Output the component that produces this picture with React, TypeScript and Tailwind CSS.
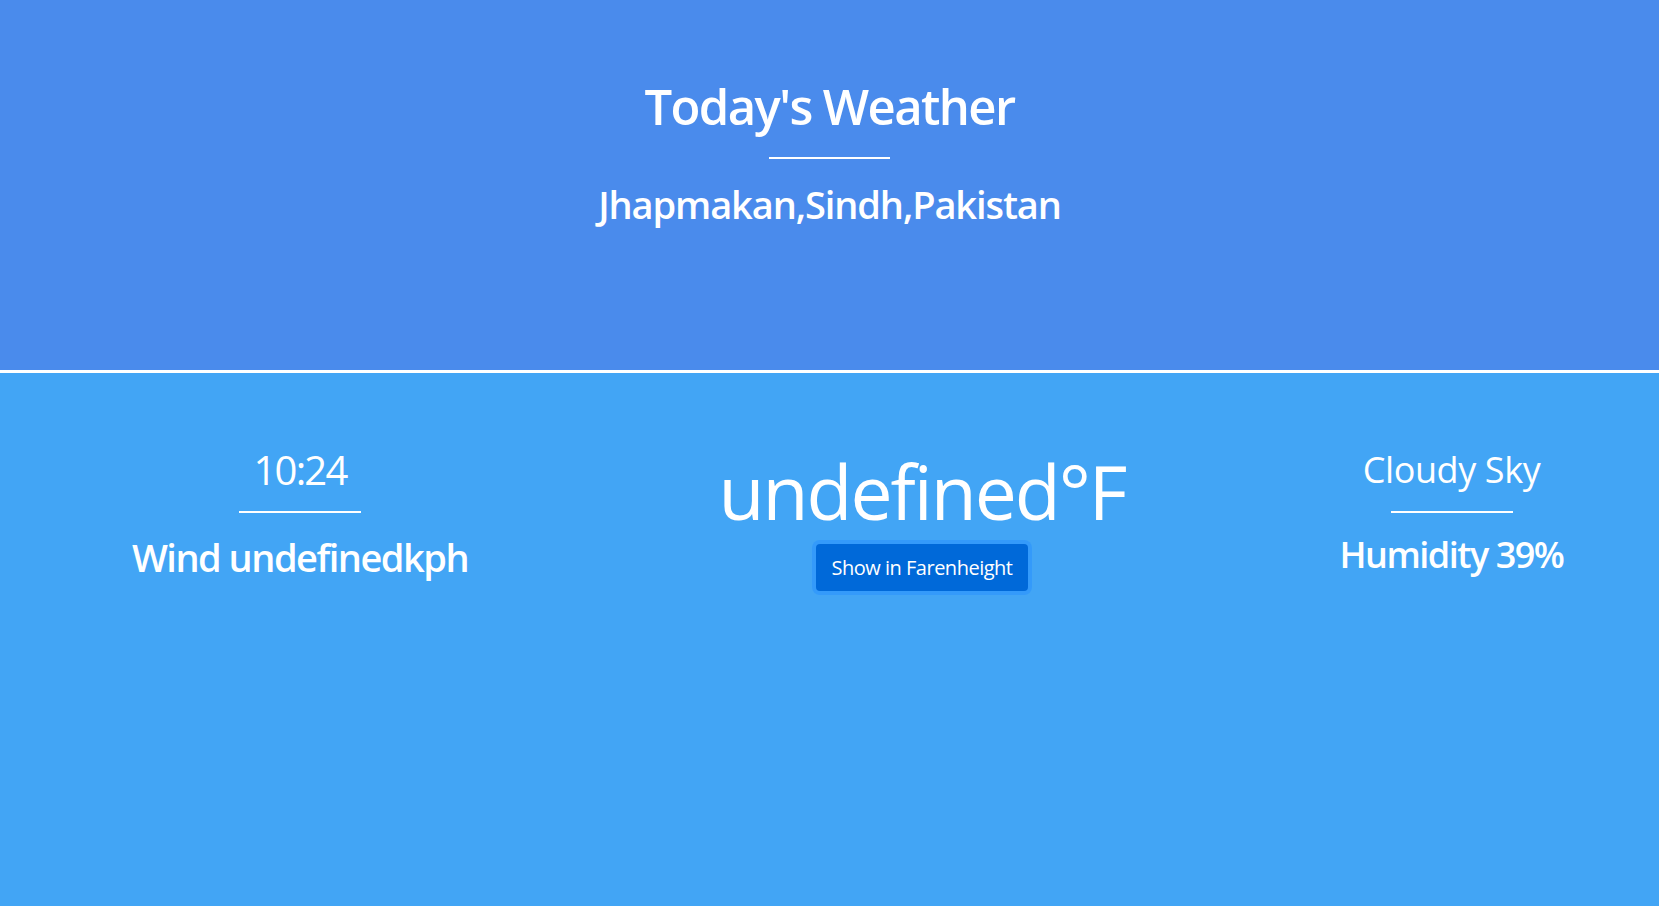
export default function App() {
  return (
    <div className="min-h-screen flex bg-white text-white font-['Open_Sans',sans-serif]">
      <div className="w-[1659px] flex flex-col">
        {/* header */}
        <header className="h-[370px] bg-[#4a8bec] flex flex-col items-center pt-[82px]">
          <h1 className="text-[49px] leading-none font-semibold tracking-[-1.6px]">Today's Weather</h1>
          <div className="mt-[26px] h-[2px] w-[121px] bg-white" />
          <h2 className="mt-[26px] text-[38px] leading-none font-semibold tracking-[-1.1px]">Jhapmakan,Sindh,Pakistan</h2>
        </header>
        <div className="h-[3px] bg-white" />

        {/* details */}
        <main className="flex-1 bg-[#42a5f5] grid grid-cols-[600px_644px_415px] items-start">
          <div className="flex flex-col items-center pt-[77px]">
            <h3 className="text-[40px] leading-none font-normal tracking-[-1.8px]">10:24</h3>
            <div className="mt-[21px] h-[2px] w-[122px] bg-white" />
            <h3 className="mt-[25px] text-[38px] leading-none font-semibold tracking-[-1.5px]">Wind undefinedkph</h3>
          </div>

          <div className="flex flex-col items-center pt-[81px]">
            <h1 className="text-[75px] leading-none font-normal tracking-[-2px]">undefined°F</h1>
            <button className="mt-[15px] rounded-[4px] bg-[#0069d9] px-4 py-2 text-[20px] leading-[31px] tracking-[-0.5px] text-white shadow-[0_0_0_4px_rgba(38,143,255,0.5)]">
              Show in Farenheight
            </button>
          </div>

          <div className="flex flex-col items-center pt-[79px]">
            <h3 className="text-[36px] leading-none font-normal tracking-[-0.4px]">Cloudy Sky</h3>
            <div className="mt-[23px] h-[2px] w-[122px] bg-white" />
            <h3 className="mt-[24px] text-[36px] leading-none font-semibold tracking-[-1.5px]">Humidity 39%</h3>
          </div>
        </main>
      </div>
    </div>
  );
}
